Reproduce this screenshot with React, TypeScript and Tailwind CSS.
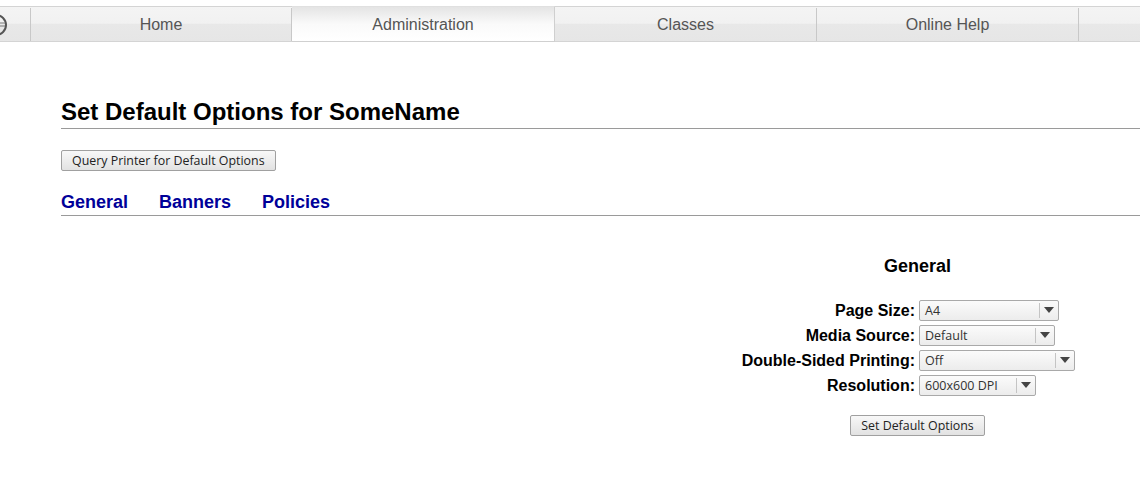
import React from "react";

const sans = { fontFamily: '"Liberation Sans", Arial, sans-serif' };
const ui = { fontFamily: '"Open Sans", "Noto Sans", sans-serif' };

function Select({ value, width }: { value: string; width: number }) {
  return (
    <div
      className="flex h-[21px] items-stretch rounded-[2px] border border-[#a9a9a9] bg-gradient-to-b from-[#fbfbfb] to-[#ececec] text-[12.5px] text-[#333]"
      style={{ width, ...ui }}
    >
      <div className="flex flex-1 items-center pl-[5px] pt-[2px] leading-none">{value}</div>
      <div className="my-[2px] w-px bg-[#c4c4c4]" />
      <div className="flex w-[18px] items-center justify-center">
        <svg width="10" height="7" viewBox="0 0 10 7">
          <polygon points="0,0 10,0 5,6" fill="#444" />
        </svg>
      </div>
    </div>
  );
}

function Btn({ children }: { children: React.ReactNode }) {
  return (
    <div
      className="inline-flex h-[21px] items-center rounded-[2px] border border-[#a0a0a0] bg-gradient-to-b from-[#f8f8f8] to-[#e2e2e2] px-[10px] pt-[1px] text-[12.4px] leading-none text-[#222]"
      style={ui}
    >
      {children}
    </div>
  );
}

export default function App() {
  const rows: [string, string, number][] = [
    ["Page Size:", "A4", 140],
    ["Media Source:", "Default", 136],
    ["Double-Sided Printing:", "Off", 156],
    ["Resolution:", "600x600 DPI", 117],
  ];
  return (
    <div className="relative h-[483px] w-[1140px] overflow-hidden bg-white" style={sans}>
      {/* top nav */}
      <div className="mt-[6px] flex h-[36px] border-y border-[#d4d4d4] bg-[linear-gradient(to_bottom,#f4f4f4_0%,#f1f1f1_48%,#e8e8e8_50%,#e6e6e6_100%)] pt-[1px] text-[16px] text-[#555]">
        <div className="flex w-[31px] shrink-0 items-center border-r border-[#c8c8c8]">
          <svg width="30" height="34" viewBox="0 0 30 34">
            <circle cx="-4" cy="17" r="10" fill="none" stroke="#555" strokeWidth="2" />
            <line x1="0" y1="15" x2="5" y2="15" stroke="#777" strokeWidth="1" />
            <line x1="0" y1="18" x2="5" y2="18" stroke="#777" strokeWidth="1" />
          </svg>
        </div>
        <div className="flex w-[261px] shrink-0 items-center justify-center border-r border-[#c8c8c8]">Home</div>
        <div className="-mb-px -mt-[2px] flex w-[263px] shrink-0 items-center justify-center border-r border-t border-b border-[#cfcfcf] border-t-[#e0e0e0] border-b-[#d0d0d0] bg-gradient-to-b from-[#e4e4e4] via-[#fafafa] to-white pt-[1px]">
          Administration
        </div>
        <div className="flex w-[262px] shrink-0 items-center justify-center border-r border-[#c8c8c8]">Classes</div>
        <div className="flex w-[262px] shrink-0 items-center justify-center border-r border-[#c8c8c8]">Online Help</div>
        <div className="flex-1" />
      </div>

      {/* content */}
      <div className="w-[1774px] pl-[61px]">
        <div className="mt-[56px] border-b border-[#9a9a9a] pb-[2px]">
          <h2 className="text-[24px] font-bold leading-[28px] text-black">Set Default Options for SomeName</h2>
        </div>

        <div className="mt-[21px] flex">
          <Btn>Query Printer for Default Options</Btn>
        </div>

        <div className="mt-[20px] flex gap-[31px] border-b border-[#9a9a9a] pb-[2px] text-[18px] font-bold leading-[22px] text-[#000099]">
          <span>General</span>
          <span>Banners</span>
          <span>Policies</span>
        </div>

        <div className="flex w-[1713px] flex-col items-center">
          <h3 className="mt-[39px] text-[18px] font-bold leading-[22px] text-black">General</h3>
          <div className="mt-[23px] grid grid-cols-[173px_174px] gap-x-[4px] gap-y-[4px]">
            {rows.map(([label, value, w]) => (
              <React.Fragment key={label}>
                <div className="flex h-[21px] items-center justify-end whitespace-nowrap text-[16px] font-bold text-black">
                  {label}
                </div>
                <div>
                  <Select value={value} width={w} />
                </div>
              </React.Fragment>
            ))}
          </div>
          <div className="mt-[19px] flex">
            <Btn>Set Default Options</Btn>
          </div>
        </div>
      </div>
    </div>
  );
}
